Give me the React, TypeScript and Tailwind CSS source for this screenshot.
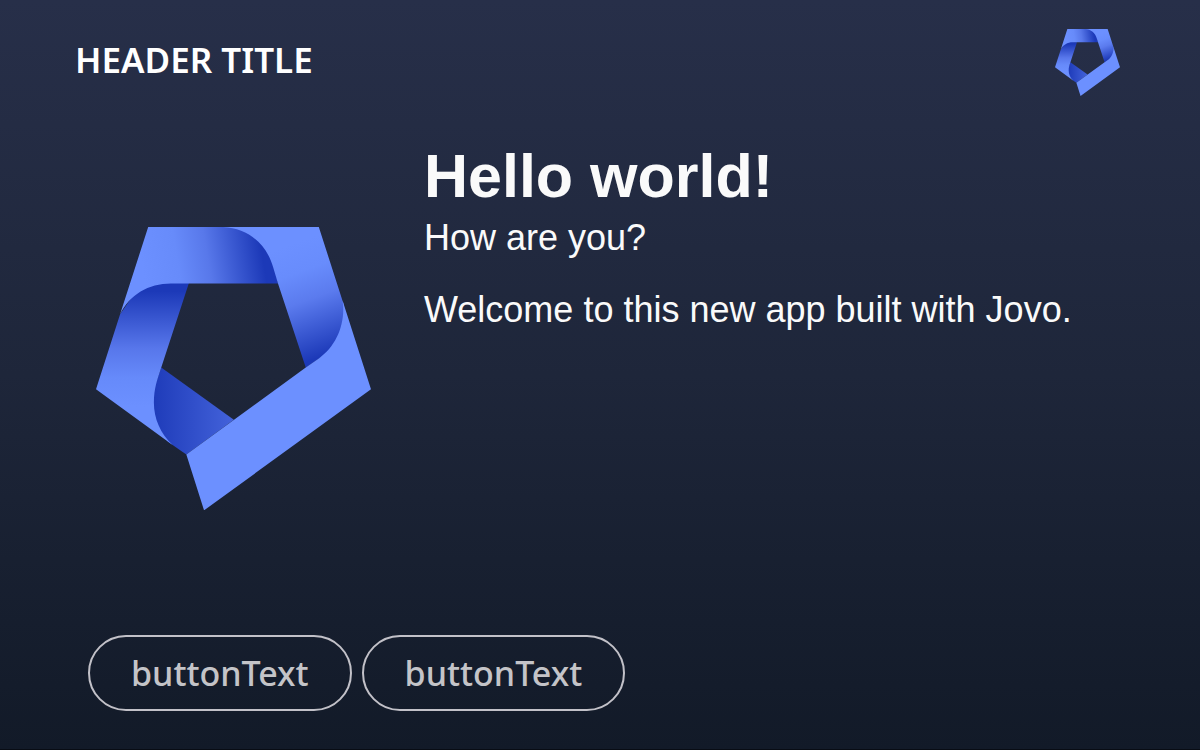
import { useId } from 'react';

function JovoLogo({ className }: { className: string }) {
  const id = useId();
  const fill = (name: string) => `url(#${id}${name})`;

  return (
    <svg viewBox="50 53 822 848" className={className} role="img" aria-label="Jovo">
      <defs>
        <linearGradient id={`${id}top`} gradientUnits="userSpaceOnUse" x1="190" y1="185" x2="545" y2="125">
          <stop offset="0" stopColor="#6c90ff" />
          <stop offset="0.3" stopColor="#678bfa" />
          <stop offset="0.55" stopColor="#5878ea" />
          <stop offset="1" stopColor="#1c39b8" />
        </linearGradient>
        <linearGradient id={`${id}left`} gradientUnits="userSpaceOnUse" x1="0" y1="245" x2="0" y2="590">
          <stop offset="0" stopColor="#1c39b8" />
          <stop offset="0.5" stopColor="#5877eb" />
          <stop offset="0.75" stopColor="#668afa" />
          <stop offset="1" stopColor="#6c90ff" />
        </linearGradient>
        <linearGradient id={`${id}right`} gradientUnits="userSpaceOnUse" x1="620" y1="110" x2="738" y2="435">
          <stop offset="0" stopColor="#6c90ff" />
          <stop offset="0.25" stopColor="#688cfc" />
          <stop offset="0.5" stopColor="#5b7bee" />
          <stop offset="1" stopColor="#1c39b8" />
        </linearGradient>
        <linearGradient id={`${id}bottom`} gradientUnits="userSpaceOnUse" x1="224" y1="0" x2="460" y2="0">
          <stop offset="0" stopColor="#1f3cba" />
          <stop offset="1" stopColor="#4362da" />
        </linearGradient>
      </defs>
      <path d="M245 473 L462 629 L320 733 L265 695 L200 600 Z" fill={fill('bottom')} />
      <path
        d="M328 220 L245 473 C233 510 223 535 223 578 C223 625 242 669 279 705 L50 538 L122 314 L190 215 Z"
        fill={fill('left')}
      />
      <path d="M206 53 H560 L594 222 H274 C207 222 150 256 122 314 Z" fill={fill('top')} />
      <path
        d="M430 53 H716 L790 283 L800 390 L677 473 L594 222 L580 175 C561 105 505 56 430 53 Z"
        fill={fill('right')}
      />
      <path
        d="M787 273 L872 538 L373 900 L320 733 L677 473 L717 445 C768 408 797 342 787 273 Z"
        fill="#6c90ff"
      />
    </svg>
  );
}

function ActionButton({ label }: { label: string }) {
  return (
    <button
      type="button"
      className="h-19 rounded-full border-2 border-[#c2c1c8] px-[41px] font-['Noto_Sans',sans-serif] text-[34px] leading-none font-medium text-[#c4c4c8]"
    >
      {label}
    </button>
  );
}

export default function App() {
  return (
    <div className="flex min-h-screen flex-col border-b border-[#080c14] bg-linear-to-b from-[#272f49] via-[#1e263a] to-[#121a28] font-['Liberation_Sans',sans-serif] text-[#fafafa]">
      <header className="flex items-center justify-between pt-[29px] pr-20 pl-[75px]">
        <h1 className="pb-1.5 font-['Noto_Sans',sans-serif] text-[35px] leading-none font-semibold text-white">
          HEADER TITLE
        </h1>
        <JovoLogo className="w-[65px]" />
      </header>

      <main className="flex flex-1 items-center gap-[53px] pt-1.5 pr-20 pl-24">
        <JovoLogo className="w-[275px] shrink-0" />
        <section className="self-start pt-9">
          <h2 className="text-[61px] leading-[76px] font-bold">Hello world!</h2>
          <p className="mt-1.5 text-[36px] leading-9">How are you?</p>
          <p className="mt-9 text-[36px] leading-9">Welcome to this new app built with Jovo.</p>
        </section>
      </main>

      <footer className="flex gap-2.5 px-[88px] pb-[38px]">
        <ActionButton label="buttonText" />
        <ActionButton label="buttonText" />
      </footer>
    </div>
  );
}
